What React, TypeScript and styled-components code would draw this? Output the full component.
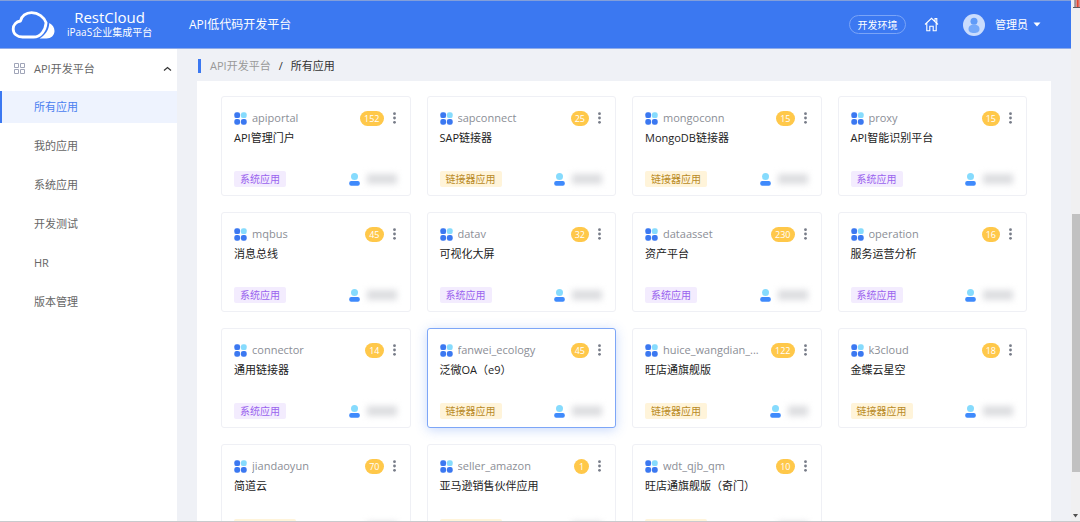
import React from 'react';
import styled, { createGlobalStyle } from 'styled-components';

const Global = createGlobalStyle`
  *, *::before, *::after { box-sizing: border-box; }
  body {
    margin: 0;
    overflow: hidden;
    background: #eff1f6;
    font-family: "Open Sans", "Noto Sans CJK SC", sans-serif;
    font-size: 11px;
    line-height: 16px;
    color: #333;
  }
  button { font: inherit; color: inherit; border: 0; padding: 0; background: none; cursor: pointer; }
  a { color: inherit; text-decoration: none; }
  svg { display: block; flex: none; }
`;

const Shell = styled.div`
  display: flex;
  height: 100vh;
  border-bottom: 1px solid #c9cacd;
`;
const Page = styled.div`
  flex: 1;
  min-width: 0;
  display: flex;
  flex-direction: column;
`;

const Header = styled.header`
  flex: none;
  display: flex;
  align-items: center;
  height: 49px;
  padding: 0 30px 0 11px;
  background: #3b78f1;
  border-top: 1px solid #839fd9;
  border-bottom: 1px solid #8fabe9;
  color: #fff;
`;
const Brand = styled.a`
  display: flex;
  align-items: center;
  gap: 12px;
  width: 178px;
`;
const BrandText = styled.span`
  display: flex;
  flex-direction: column;
  align-items: center;
  font-size: 10px;
  line-height: 12px;
  padding-bottom: 2px;
`;
const BrandName = styled.span`
  font-size: 15px;
  line-height: 17px;
`;
const Product = styled.h1`
  flex: 1;
  margin: 0;
  font-size: 12px;
  font-weight: 400;
`;
const EnvButton = styled.button`
  height: 19px;
  width: 57px;
  border: 1px solid #7aa4f7;
  border-radius: 10px;
  font-size: 10px;
  line-height: 16px;
`;
const HomeLink = styled.a`
  margin: 0 24px 0 18px;
`;
const UserButton = styled.button`
  display: flex;
  align-items: center;
  gap: 10px;
`;
const UserName = styled.span`
  display: flex;
  align-items: center;
  gap: 5px;
`;

const Body = styled.div`
  flex: 1;
  min-height: 0;
  display: flex;
`;
const Sidebar = styled.nav`
  flex: none;
  width: 177px;
  background: #fff;
  color: #666;
`;
const Group = styled.button`
  display: flex;
  align-items: center;
  width: 100%;
  height: 42px;
  padding: 0 5px 3px 14px;
  text-align: left;
`;
const GroupName = styled.span`
  flex: 1;
  margin-left: 9px;
`;
const Menu = styled.ul`
  display: flex;
  flex-direction: column;
  gap: 7px;
  margin: 0;
  padding: 0;
  list-style: none;
`;
const MenuLink = styled.a<{ $active?: boolean }>`
  display: flex;
  align-items: center;
  height: 32px;
  padding-left: 32px;
  border-left: 2px solid ${p => (p.$active ? '#3b78f1' : 'transparent')};
  background: ${p => (p.$active ? '#eef3fe' : 'none')};
  color: ${p => (p.$active ? '#4a80f0' : 'inherit')};
`;

const Main = styled.main`
  flex: 1;
  min-width: 0;
  display: flex;
  flex-direction: column;
  padding: 0 20px;
  overflow: hidden;
`;
const Crumbs = styled.nav`
  flex: none;
  display: flex;
  align-items: center;
  gap: 8px;
  height: 32px;
  padding-top: 1px;
  color: #999;
`;
const CrumbMark = styled.span`
  width: 3px;
  height: 14px;
  margin: 0 1px;
  background: #3b78f1;
`;
const CrumbHere = styled.span`
  color: #333;
`;
const Panel = styled.section`
  flex: 1;
  display: grid;
  grid-template-columns: repeat(4, minmax(0, 1fr));
  grid-auto-rows: 100px;
  gap: 16px;
  padding: 15px 24px;
  background: #fff;
`;

const Card = styled.article<{ $active?: boolean }>`
  display: flex;
  flex-direction: column;
  padding: 13px 13px 8px 12px;
  border: 1px solid ${p => (p.$active ? '#7da6f7' : '#eff0f5')};
  border-radius: 3px;
  background: #fff;
  box-shadow: ${p => (p.$active ? '0 2px 12px rgba(59, 120, 241, 0.28)' : 'none')};
`;
const CardHead = styled.div`
  display: flex;
  align-items: center;
  height: 16px;
`;
const Code = styled.span`
  flex: 1;
  min-width: 0;
  margin: 0 10px 0 5px;
  overflow: hidden;
  white-space: nowrap;
  text-overflow: ellipsis;
  color: #8b8e96;
`;
const Count = styled.span`
  height: 15px;
  padding: 0 4px;
  border-radius: 8px;
  min-width: 15px;
  text-align: center;
  background: #ffc84a;
  color: #fff;
  font-size: 9px;
  line-height: 15px;
`;
const More = styled.button`
  display: flex;
  justify-content: center;
  width: 5px;
  margin-left: 8px;
`;
const Title = styled.h2`
  margin: 4px 0 0;
  font-size: 11px;
  font-weight: 400;
  line-height: 16px;
  color: #222;
`;
const CardFoot = styled.div`
  display: flex;
  align-items: center;
  margin-top: auto;
`;
const Tag = styled.span<{ $link?: boolean }>`
  height: 16px;
  margin-right: auto;
  padding: 0 6px;
  border-radius: 2px;
  font-size: 10px;
  line-height: 16px;
  background: ${p => (p.$link ? '#fff4da' : '#f3ecfe')};
  color: ${p => (p.$link ? '#b98a25' : '#9a63ee')};
`;
const Owner = styled.span<{ $short?: boolean }>`
  width: ${p => (p.$short ? 20 : 30)}px;
  height: 10px;
  margin-left: 7px;
  background: #dcdde0;
  filter: blur(3px);
`;

const Rail = styled.div`
  flex: none;
  display: flex;
  flex-direction: column;
  width: 9px;
  background: #f0f0f1;
`;
const RailTop = styled.div`
  flex: 214;
  display: flex;
  justify-content: flex-end;
  align-items: flex-start;
`;
const Thumb = styled.div`
  flex: 258;
  margin-left: 1px;
  background: #c1c1c1;
`;
const RailEnd = styled.div`
  flex: 49;
  display: flex;
  align-items: flex-end;
  justify-content: center;
`;

const CloudLogo = () => (
  <svg width="44" height="30" viewBox="0 0 44 30">
    <path d="M28.500 28.500C34 25.500 38 20 38.300 13c3.200 1.500 5.200 4.500 5.200 8 0 4.500-3.500 7.500-8 7.500z" fill="#fff" />
    <path
      d="M11.500 27C6 27 2.200 23.700 2.200 19c0-4.300 3-7.300 7.300-8 1-5 5.500-8.300 11-8.300 7 0 12.500 4.300 14.600 10C34.500 20 30 27 22.500 27z"
      fill="none" stroke="#fff" strokeWidth="2.800" strokeLinejoin="round"
    />
  </svg>
);
const HomeIcon = () => (
  <svg width="15" height="15" viewBox="0 0 15 15" fill="none" stroke="#fff" strokeWidth="1.100">
    <path d="M1 7.500 7.500 1.300 14 7.500M11 4.300V1.600h1.800v4.200M2.800 6.200v7.600h3V9.200h3.400v4.600h3V6.200" />
  </svg>
);
const Avatar = () => (
  <svg width="22" height="22" viewBox="0 0 22 22">
    <circle cx="11" cy="11" r="11" fill="#c9dcfd" />
    <circle cx="11" cy="7.200" r="3.500" fill="#5f9bf8" />
    <path d="M5.500 15c0-3 2.400-4.500 5.500-4.500s5.500 1.500 5.500 4.500-2.500 4-5.500 4-5.500-1-5.500-4z" fill="#74a9fa" />
  </svg>
);
const Caret = () => (
  <svg width="8" height="5" viewBox="0 0 8 5"><path d="M.5.5h7L4 4.500z" fill="#fff" /></svg>
);
const GridIcon = () => (
  <svg width="11" height="11" viewBox="0 0 11 11" fill="none" stroke="#a0a5b8">
    <path d="M.5.5h4v4h-4zM6.500.5h4v4h-4zM.5 6.500h4v4h-4zM6.500 6.500h4v4h-4z" />
  </svg>
);
const Chevron = () => (
  <svg width="9" height="6" viewBox="0 0 9 6" fill="none" stroke="#333" strokeWidth="1.200">
    <path d="M1 4.500 4.500 1.500 8 4.500" />
  </svg>
);
const AppIcon = () => (
  <svg width="13" height="13" viewBox="0 0 13 13" fill="#3b78f1">
    <rect x=".3" y=".3" width="5.800" height="5.800" rx="2.200" />
    <rect x="6.900" y=".3" width="5.800" height="5.800" rx="2.200" fill="#86dbfd" />
    <rect x=".3" y="6.900" width="5.800" height="5.800" rx="2.200" />
    <rect x="6.900" y="6.900" width="5.800" height="5.800" rx="2.200" />
  </svg>
);
const Dots = () => (
  <svg width="3" height="12" viewBox="0 0 3 12" fill="#777c88">
    <circle cx="1.500" cy="1.700" r="1.400" />
    <circle cx="1.500" cy="6" r="1.400" />
    <circle cx="1.500" cy="10.300" r="1.400" />
  </svg>
);
const PersonIcon = () => (
  <svg width="11" height="13" viewBox="0 0 11 13">
    <circle cx="5.500" cy="3.600" r="3.500" fill="#86dbfd" />
    <rect x=".2" y="8" width="10.600" height="4.800" rx="2" fill="#3f8afc" />
  </svg>
);
const RailMarker = () => (
  <svg width="7" height="9" viewBox="0 0 7 9">
    <path d="M2.500 0H7v7.500H2.500z" fill="#d9938d" />
    <path d="M4 0h1.500v7H4z" fill="#e8452f" />
    <path d="M2 0v7M0 7.500h7" stroke="#5c5c60" fill="none" />
  </svg>
);

type App = { code: string; name: string; count: number; link?: boolean; active?: boolean; short?: boolean };
const apps: App[] = [
  { code: 'apiportal', name: 'API管理门户', count: 152 },
  { code: 'sapconnect', name: 'SAP链接器', count: 25, link: true },
  { code: 'mongoconn', name: 'MongoDB链接器', count: 15, link: true },
  { code: 'proxy', name: 'API智能识别平台', count: 15 },
  { code: 'mqbus', name: '消息总线', count: 45 },
  { code: 'datav', name: '可视化大屏', count: 32 },
  { code: 'dataasset', name: '资产平台', count: 230 },
  { code: 'operation', name: '服务运营分析', count: 16 },
  { code: 'connector', name: '通用链接器', count: 14 },
  { code: 'fanwei_ecology', name: '泛微OA（e9）', count: 45, link: true, active: true },
  { code: 'huice_wangdian_...', name: '旺店通旗舰版', count: 122, link: true, short: true },
  { code: 'k3cloud', name: '金蝶云星空', count: 18, link: true },
  { code: 'jiandaoyun', name: '简道云', count: 70, link: true },
  { code: 'seller_amazon', name: '亚马逊销售伙伴应用', count: 1, link: true },
  { code: 'wdt_qjb_qm', name: '旺店通旗舰版（奇门）', count: 10, link: true },
];
const menu = ['所有应用', '我的应用', '系统应用', '开发测试', 'HR', '版本管理'];

export default function AppPage() {
  return (
    <>
      <Global />
      <Shell>
        <Page>
          <Header>
            <Brand href="#">
              <CloudLogo />
              <BrandText>
                <BrandName>RestCloud</BrandName>
                iPaaS企业集成平台
              </BrandText>
            </Brand>
            <Product>API低代码开发平台</Product>
            <EnvButton>开发环境</EnvButton>
            <HomeLink href="#" aria-label="首页"><HomeIcon /></HomeLink>
            <UserButton>
              <Avatar />
              <UserName>管理员<Caret /></UserName>
            </UserButton>
          </Header>
          <Body>
            <Sidebar>
              <Group>
                <GridIcon />
                <GroupName>API开发平台</GroupName>
                <Chevron />
              </Group>
              <Menu>
                {menu.map((label, i) => (
                  <li key={label}><MenuLink href="#" $active={i === 0}>{label}</MenuLink></li>
                ))}
              </Menu>
            </Sidebar>
            <Main>
              <Crumbs>
                <CrumbMark />
                <a href="#">API开发平台</a>
                <CrumbHere>/</CrumbHere>
                <CrumbHere>所有应用</CrumbHere>
              </Crumbs>
              <Panel>
                {apps.map(app => (
                  <Card key={app.code} $active={app.active}>
                    <CardHead>
                      <AppIcon />
                      <Code>{app.code}</Code>
                      <Count>{app.count}</Count>
                      <More aria-label="更多"><Dots /></More>
                    </CardHead>
                    <Title>{app.name}</Title>
                    <CardFoot>
                      <Tag $link={app.link}>{app.link ? '链接器应用' : '系统应用'}</Tag>
                      <PersonIcon />
                      <Owner $short={app.short} />
                    </CardFoot>
                  </Card>
                ))}
              </Panel>
            </Main>
          </Body>
        </Page>
        <Rail>
          <RailTop><RailMarker /></RailTop>
          <Thumb />
          <RailEnd>
            <svg width="5" height="8" viewBox="0 0 5 8"><path d="M0 1h5L2.500 4.500z" fill="#505050" /></svg>
          </RailEnd>
        </Rail>
      </Shell>
    </>
  );
}
